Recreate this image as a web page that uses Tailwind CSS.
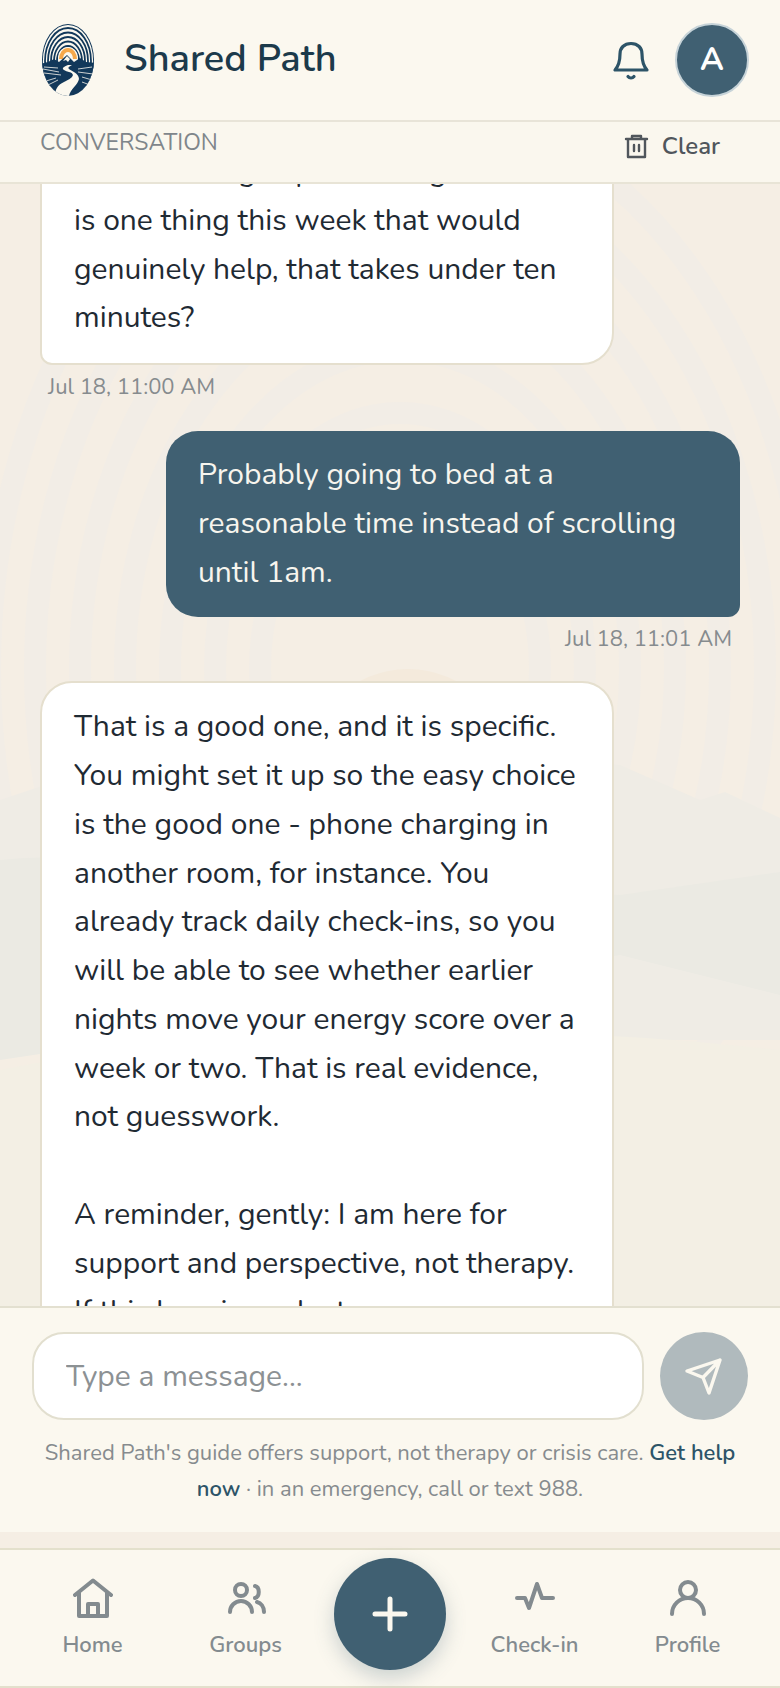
<!DOCTYPE html>
<html lang="en">
  <head>
    <meta charset="UTF-8" />
    <meta name="viewport" content="width=device-width, initial-scale=1.0" />
    <title>Shared Path</title>
    <script src="https://cdn.jsdelivr.net/npm/@tailwindcss/browser@4"></script>
  </head>
  <body
    class="relative isolate h-screen flex flex-col overflow-hidden bg-[#f5eee4] font-['Nunito','Lato',sans-serif] text-[#1f2a33]"
  >
    <!-- Watermark behind the conversation -->
    <svg
      class="absolute inset-0 -z-10 w-full h-full"
      viewBox="0 0 780 1688"
      preserveAspectRatio="xMidYMid slice"
      fill="none"
      aria-hidden="true"
    >
      <g stroke="#f2ede6" stroke-width="22">
        <ellipse cx="400" cy="669" rx="140" ry="194" />
        <ellipse cx="400" cy="669" rx="185" ry="256" />
        <ellipse cx="400" cy="669" rx="230" ry="319" />
        <ellipse cx="400" cy="669" rx="275" ry="381" />
        <ellipse cx="400" cy="669" rx="320" ry="443" />
        <ellipse cx="400" cy="669" rx="365" ry="505" />
        <ellipse cx="400" cy="669" rx="410" ry="568" />
      </g>
      <circle cx="408" cy="771" r="102" fill="#f4eadc" />
      <path
        d="M0 800L60 780L150 770L400 740L620 765L700 800L725 792L780 818V1040H0Z"
        fill="#efece5"
      />
      <path
        d="M0 860Q80 850 180 880L620 895L780 872V995L620 955L200 1030L0 1060Z"
        fill="#ebeae3"
      />
      <path
        d="M0 1070Q200 1030 400 1030T780 1050V1500H0Z"
        fill="#f3efe4"
      />
    </svg>

    <header
      class="flex items-center h-[122px] shrink-0 pl-10 pr-[31px] border-b-2 border-[#e8e4d8] bg-[#fbf8ef]"
    >
      <svg class="w-14 h-[74px]" viewBox="0 0 56 74" aria-hidden="true">
        <defs>
          <clipPath id="oval"><ellipse cx="28" cy="37" rx="26" ry="36" /></clipPath>
        </defs>
        <g clip-path="url(#oval)">
          <g fill="none" stroke="#12385a" stroke-width="1.8">
            <ellipse cx="28" cy="38" rx="26" ry="37" />
            <ellipse cx="28" cy="38" rx="23" ry="33" />
            <ellipse cx="28" cy="38" rx="20" ry="28.5" />
            <ellipse cx="28" cy="38" rx="17" ry="24" />
            <ellipse cx="28" cy="38" rx="14" ry="19.5" />
            <ellipse cx="28" cy="38" rx="11" ry="15" />
          </g>
          <circle cx="28" cy="34" r="10" fill="#fbf8ef" />
          <path d="M19 36a9 11 0 0 1 18 0z" fill="#f6a84b" />
          <path d="M23 36a5 7 0 0 1 10 0z" fill="#fbf8ef" />
          <path
            d="M0 41L8 39L14 36L19 39L27 32L34 39L40 35L46 39L56 40V74H0Z"
            fill="#12385a"
          />
          <path d="M27 33l-4 5 3-1 2 2 2-3 3 3z" fill="#fbf8ef" />
          <path
            d="M28 42C20 45 22 47 29 49C36 51 33 55 24 59C17 62 15 67 15 74H29C29 67 38 62 39 56C39 50 31 48 29 46C28 45 28 44 32 42Z"
            fill="#fbf8ef"
          />
          <path
            d="M3 46l16 3M4 50l17 2M6 58l10-3M8 62l10-5M38 46l14-2M38 49l15 2M42 54l10 3M42 59l8 3M4 44l14 1"
            stroke="#fbf8ef"
            stroke-width="0.8"
          />
        </g>
      </svg>
      <h1 class="ml-7 pb-0.5 text-[38px] leading-[1.3] font-semibold text-[#1c3a4b]">
        Shared Path
      </h1>
      <button class="ml-auto mr-5 p-1 text-[#2d5468]" aria-label="Notifications">
        <svg
          class="w-10 h-10"
          viewBox="0 0 40 40"
          fill="none"
          stroke="currentColor"
          stroke-width="3.2"
          stroke-linecap="round"
          stroke-linejoin="round"
        >
          <path
            d="M20 3.500C13 3.500 9 8 9 14C9 21 7.500 26 4 30H36C32.500 26 31 21 31 14C31 8 27 3.500 20 3.500Z"
          />
          <path d="M17 36.500C18.500 38.500 21.500 38.500 23 36.500" />
        </svg>
      </button>
      <button
        class="size-[74px] rounded-full border-2 border-[#c6d3d8] bg-[#406072] text-white text-[32px] font-bold"
      >
        A
      </button>
    </header>

    <div
      class="flex items-start justify-between h-[62px] shrink-0 pl-10 pr-[60px] border-b-2 border-[#e8e4d6] bg-[#faf7ee]"
    >
      <h2 class="pt-[5px] text-[23px] leading-8 text-[#7f868b]">CONVERSATION</h2>
      <button
        class="flex items-center gap-3 pt-2 text-[24px] leading-8 font-semibold text-[#50565c]"
      >
        <svg
          class="w-7 h-7"
          viewBox="0 0 28 28"
          fill="none"
          stroke="currentColor"
          stroke-width="2.4"
          stroke-linecap="round"
          stroke-linejoin="round"
        >
          <path d="M4 7H25M6 7V25H23V7M10 7V4H19V7M12 13V19M17 13V19" />
        </svg>
        Clear
      </button>
    </div>

    <!-- Messages -->
    <main
      class="flex-1 min-h-0 overflow-y-auto [scrollbar-width:none] px-10 text-[30px] leading-relaxed"
    >
      <!-- Pulled up so the thread sits part-way scrolled -->
      <article class="-mt-[58px]">
        <p
          class="w-[82%] px-8 py-5 rounded-4xl rounded-bl-xl border-2 border-[#e5dfce] bg-white"
        >
          It is not being expected to go. What<br />
          is one thing this week that would<br />
          genuinely help, that takes under ten<br />
          minutes?
        </p>
        <time class="block px-2 pt-1.5 text-[22px] leading-8 text-[#868b8e]">
          Jul 18, 11:00 AM
        </time>
      </article>
      <article class="pt-7">
        <p
          class="w-[82%] ml-auto px-8 py-5 rounded-4xl rounded-br-xl bg-[#406072] text-[#f7f5ee]"
        >
          Probably going to bed at a<br />
          reasonable time instead of scrolling<br />
          until 1am.
        </p>
        <time
          class="block px-2 pt-1.5 text-right text-[22px] leading-8 text-[#868b8e]"
        >
          Jul 18, 11:01 AM
        </time>
      </article>
      <article class="pt-[26px]">
        <div
          class="w-[82%] px-8 py-5 rounded-4xl rounded-bl-xl border-2 border-[#e5dfce] bg-white"
        >
          <p>
            That is a good one, and it is specific.<br />
            You might set it up so the easy choice<br />
            is the good one - phone charging in<br />
            another room, for instance. You<br />
            already track daily check-ins, so you<br />
            will be able to see whether earlier<br />
            nights move your energy score over a<br />
            week or two. That is real evidence,<br />
            not guesswork.
          </p>
          <br />
          <p>
            A reminder, gently: I am here for<br />
            support and perspective, not therapy.<br />
            If this heaviness lasts
          </p>
        </div>
      </article>
    </main>

    <!-- Composer -->
    <form
      class="shrink-0 h-[226px] px-8 pt-6 border-t-2 border-[#e3e0d0] bg-[#fbf8ef]"
    >
      <div class="flex gap-4">
        <input
          type="text"
          aria-label="Message"
          placeholder="Type a message..."
          class="flex-1 min-w-0 h-[88px] px-8 rounded-4xl border-2 border-[#e2dfcf] bg-white text-[30px] placeholder:text-[#8c9194]"
        />
        <button
          type="button"
          aria-label="Send"
          class="size-[88px] rounded-full bg-[#b0babd] text-[#fbf8ef] flex items-center justify-center"
        >
          <svg
            class="w-10 h-10"
            viewBox="0 0 40 40"
            fill="none"
            stroke="currentColor"
            stroke-width="3.4"
            stroke-linecap="round"
            stroke-linejoin="round"
          >
            <path d="M36 4L3 15L19 21.500L25 37ZM36 4L19 21.500" />
          </svg>
        </button>
      </div>
      <p class="pt-[15px] text-center text-[22px] leading-9 text-[#868b8e]">
        Shared Path's guide offers support, not therapy or crisis care.
        <a href="#help" class="font-semibold text-[#2d5468]">Get help<br />now</a>
        · in an emergency, call or text 988.
      </p>
    </form>

    <!-- Tab bar -->
    <nav
      class="shrink-0 h-[140px] mt-4 px-4 flex border-y-2 border-[#e3e0cc] bg-[#fbf8ef] text-[22px] leading-7 font-semibold text-[#838b8f]"
    >
      <a href="#home" class="flex-1 flex flex-col items-center pt-7 gap-[13px]">
        <svg
          class="w-10 h-10"
          viewBox="0 0 40 40"
          fill="none"
          stroke="currentColor"
          stroke-width="4"
          stroke-linecap="round"
          stroke-linejoin="round"
        >
          <path d="M2 17L20 2.500L38 17M6 14V38H34V14M15 38V26H25V38" />
        </svg>
        Home
      </a>
      <a href="#groups" class="flex-1 flex flex-col items-center pt-7 gap-[13px]">
        <svg
          class="w-10 h-10"
          viewBox="0 0 40 40"
          fill="none"
          stroke="currentColor"
          stroke-width="4"
          stroke-linecap="round"
        >
          <circle cx="15" cy="12" r="6" />
          <path
            d="M4 34a11 11 0 0 1 22 0M29 8C34 9 34 19 29 20M31 24C35 25 38 29 38 34"
          />
        </svg>
        Groups
      </a>
      <div class="w-[136px] flex justify-center pt-2">
        <button
          aria-label="New"
          class="size-28 rounded-full bg-[#406072] text-[#fbf8ef] flex items-center justify-center shadow-[0_8px_20px_rgba(64,96,114,0.25)]"
        >
          <svg
            class="w-9 h-9"
            viewBox="0 0 36 36"
            stroke="currentColor"
            stroke-width="5"
            stroke-linecap="round"
          >
            <path d="M18 3V33M3 18H33" />
          </svg>
        </button>
      </div>
      <a href="#checkin" class="flex-1 flex flex-col items-center pt-7 gap-[13px]">
        <svg
          class="w-10 h-10"
          viewBox="0 0 40 40"
          fill="none"
          stroke="currentColor"
          stroke-width="4"
          stroke-linecap="round"
          stroke-linejoin="round"
        >
          <path d="M2 20H10L14 30L22 6L27 20H38" />
        </svg>
        Check-in
      </a>
      <a href="#profile" class="flex-1 flex flex-col items-center pt-7 gap-[13px]">
        <svg
          class="w-10 h-10"
          viewBox="0 0 40 40"
          fill="none"
          stroke="currentColor"
          stroke-width="4"
          stroke-linecap="round"
        >
          <circle cx="20" cy="12" r="8" />
          <path d="M4 36a16 16 0 0 1 32 0" />
        </svg>
        Profile
      </a>
    </nav>
  </body>
</html>
